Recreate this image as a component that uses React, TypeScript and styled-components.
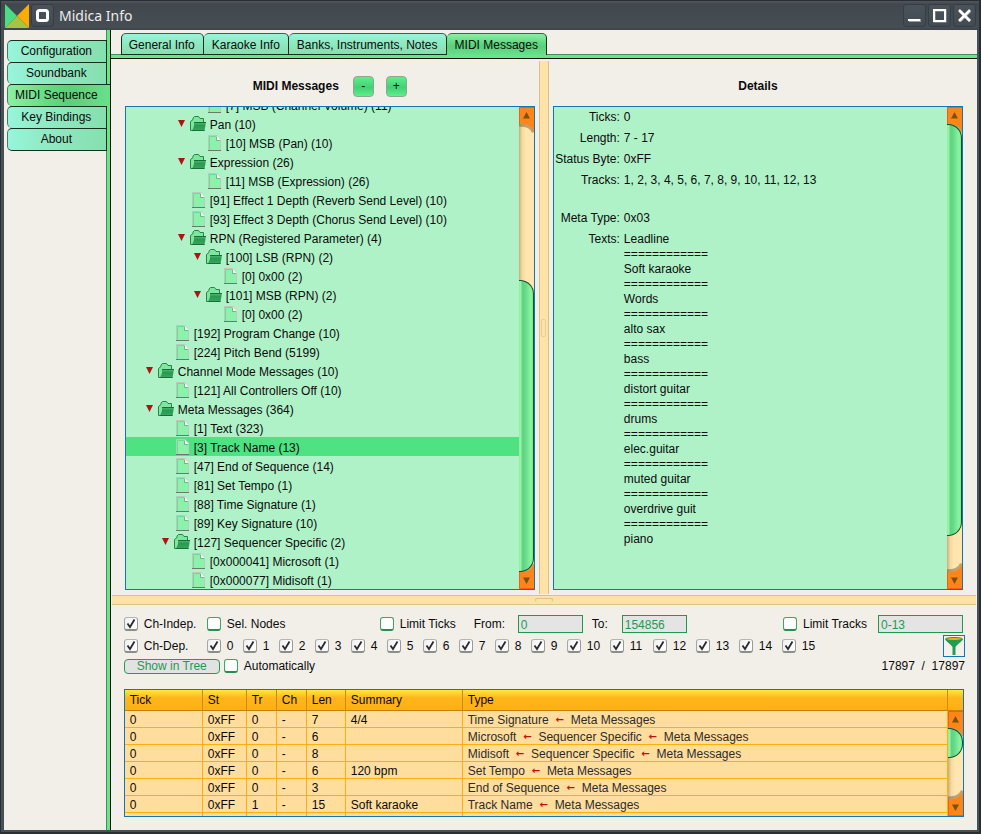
import React, { useState } from "react";
import styled, { createGlobalStyle, css } from "styled-components";

const Global = createGlobalStyle`
  *, *::before, *::after { box-sizing: border-box; }
  body {
    margin: 0;
    background: #2b3238;
    color: #0b0b0b;
    font-family: "Liberation Sans", Arial, sans-serif;
    font-size: 12px;
    line-height: 15px;
  }
  button, input { font: inherit; color: inherit; margin: 0; padding: 0; }
  ul { list-style: none; margin: 0; padding: 0; }
`;

/* ---------- window frame ---------- */

const Window = styled.div`
  display: flex;
  flex-direction: column;
  height: 100vh;
  min-height: 560px;
  border: 0 solid #272e34;
  border-width: 1px 2px 2px 1px;
  background: #485057;
`;

const TitleBar = styled.header`
  display: flex;
  align-items: center;
  gap: 2px;
  height: 29px;
  flex: none;
  padding: 0 3px 0 4px;
  background: linear-gradient(#51575d 0, #41474d 3px, #464e54 26px, #3d4349 29px);
`;

const Title = styled.h1`
  flex: 1;
  margin: 0 0 0 3px;
  font: 400 14px/22px "Noto Sans", sans-serif;
  color: #ececec;
`;

const FrameButton = styled.button`
  display: flex;
  align-items: center;
  justify-content: center;
  width: 23px;
  height: 23px;
  border: 1px solid #363d43;
  border-radius: 3px;
  background: linear-gradient(#4b535a, #434b52);
`;

const Body = styled.div`
  display: flex;
  flex: 1;
  min-height: 0;
  margin: 0 2px 2px 3px;
  background: #f2efe9;
`;

/* ---------- tabs ---------- */

const SideTabs = styled.nav`
  display: flex;
  flex-direction: column;
  flex: none;
  padding: 10px 0 0 3px;
`;

const tabColours = css<{ $active: boolean }>`
  background: ${(p) =>
    p.$active
      ? "linear-gradient(var(--dir), #8cf0a4, #5fd87f 45%, #5bcf7a 60%, #68e08c)"
      : "linear-gradient(var(--dir), #98f5dc, #92ecc8 30%, #86dfae)"};
`;

const SideTab = styled.button<{ $active: boolean }>`
  --dir: 90deg;
  position: relative;
  z-index: 1;
  height: 22px;
  margin-right: ${(p) => (p.$active ? "-4px" : "-1px")};
  padding: 0 ${(p) => (p.$active ? "12px" : "8px")} 0 7px;
  border: 1px solid #14301f;
  border-bottom-width: 0;
  border-left-color: #3c7f5c;
  border-right: ${(p) => (p.$active ? "0" : "1px solid #14301f")};
  border-radius: 5px 0 0 5px;
  ${tabColours}
  &:last-child {
    height: 23px;
    border-bottom-width: 1px;
  }
`;

const SideStrip = styled.div`
  flex: none;
  width: 5px;
  background: #68e48d;
  border: 0 solid #3f8f5b;
  border-left-width: 1px;
  border-right: 1px solid #04140a;
`;

const Main = styled.main`
  display: flex;
  flex-direction: column;
  flex: 1;
  min-width: 0;
`;

const TopTabs = styled.nav`
  display: flex;
  flex: none;
  padding: 3px 0 0 10px;
`;

const TopTab = styled.button<{ $active: boolean }>`
  --dir: 180deg;
  position: relative;
  z-index: 1;
  height: 22px;
  margin-bottom: -1px;
  padding: 2px 8px 0 7px;
  white-space: nowrap;
  border: 1px solid #14301f;
  border-top-color: #2e6b49;
  border-bottom: ${(p) => (p.$active ? "0" : "1px solid #14301f")};
  border-radius: 5px 5px 0 0;
  ${tabColours}
  & + & { border-left-width: 0; padding-left: 8px; }
  & + &:last-child { padding-left: 7px; }
`;

const TopStrip = styled.div`
  flex: none;
  height: 5px;
  background: #68e48d;
  border-top: 1px solid #3f8f5b;
  border-bottom: 1px solid #04140a;
`;

/* ---------- split panes ---------- */

const Upper = styled.div`
  display: flex;
  flex: 1;
  min-height: 0;
  margin: 2px 0 1px;
`;

const Pane = styled.section<{ $side: "left" | "right" }>`
  display: flex;
  flex-direction: column;
  flex: 1 1 0;
  min-width: 0;
  padding: ${(p) => (p.$side === "left" ? "0 4px 4px 14px" : "0 14px 4px 4px")};
`;

const PaneHeader = styled.div`
  display: flex;
  align-items: center;
  justify-content: center;
  gap: 12px;
  flex: none;
  height: 45px;
  padding-top: 5px;
`;

const Heading = styled.h2`
  margin: 0;
  font-size: 12px;
  font-weight: 700;
`;

const SquareButton = styled.button`
  width: 21px;
  height: 21px;
  border: 1px solid #8fa596;
  border-radius: 4px;
  background: linear-gradient(#5bf08c, #45cf74 55%, #5bf08c);
  &:first-of-type { margin-left: 2px; }
`;

const Viewport = styled.div`
  display: flex;
  flex: 1;
  min-height: 0;
  overflow: hidden;
  border: 1px solid #1474b8;
  background: #b0f2c8;
`;

const VSplit = styled.div`
  display: flex;
  align-items: center;
  justify-content: center;
  flex: none;
  width: 10px;
  background: #ffe2a6;
  border: 0 solid #d9c28a;
  border-width: 0 1px;
  &::after {
    content: "";
    width: 5px;
    height: 18px;
    border: 1px solid #e8cd96;
    border-radius: 2px;
  }
`;

const HSplit = styled.div`
  display: flex;
  align-items: center;
  justify-content: center;
  flex: none;
  height: 10px;
  margin: 0 1px;
  background: #ffe2a6;
  border: 0 solid #d9c28a;
  border-width: 1px 0;
  &::after {
    content: "";
    width: 18px;
    height: 4px;
    border: 1px solid #dcc088;
    border-bottom: 0;
    border-radius: 2px;
  }
`;

/* ---------- scroll bar ---------- */

const Bar = styled.div`
  display: flex;
  flex-direction: column;
  flex: none;
  width: 15px;
  overflow: hidden;
  background: linear-gradient(90deg, #c9ad79, #f3d79f 3px, #ffe6ae 7px, #ffe6ae);
`;

const ArrowButton = styled.button`
  display: block;
  flex: none;
  width: 15px;
  height: 17px;
  border: 0;
  background: none;
  svg { display: block; overflow: visible; }
`;

const Track = styled.div`
  display: flex;
  flex-direction: column;
  flex: 1;
  min-height: 0;
`;

const Space = styled.div<{ $grow: number }>`
  flex: ${(p) => p.$grow} 1 0;
`;

const Thumb = styled.div<{ $grow: number }>`
  position: relative;
  z-index: 1;
  flex: ${(p) => p.$grow} 1 0;
  border: 1px solid #14502b;
  border-left: 0;
  border-radius: 0 14px 14px 0;
  background: linear-gradient(90deg, #8ff0a0, #9bf5a4 2px, #5fd283 3px, #63d888 6px, #8cf5a0 12px, #70e890);
`;

function ArrowFace({ down = false }: { down?: boolean }) {
  return (
    <svg width="15" height="17" viewBox="0 0 15 17" aria-hidden="true">
      <g transform={down ? "matrix(1 0 0 -1 0 17)" : undefined}>
        <path d="M0 18C7 17 12 19 15 25" fill="none" stroke="#6b5326" strokeOpacity="0.45" strokeWidth="4" />
        <path d="M0 0H15V25C13 19 8 16.500 0 17Z" fill="#ff8518" />
        <path d="M0.500 17V0.500H15" fill="none" stroke="#f0601a" />
        <path d="M4 11.500L7.500 5L11 11.500Z" fill="#7a5208" />
      </g>
    </svg>
  );
}

function ScrollBar({ before, size, after }: { before: number; size: number; after: number }) {
  return (
    <Bar>
      <ArrowButton aria-label="Scroll up"><ArrowFace /></ArrowButton>
      <Track>
        <Space $grow={before} />
        <Thumb $grow={size} />
        <Space $grow={after} />
      </Track>
      <ArrowButton aria-label="Scroll down"><ArrowFace down /></ArrowButton>
    </Bar>
  );
}

/* ---------- message tree ---------- */

const Tree = styled.ul`
  display: flex;
  flex-direction: column;
  justify-content: flex-end;
  flex: 1;
  min-width: 0;
  overflow: hidden;
`;

const TreeRow = styled.li<{ $level: number; $selected: boolean }>`
  display: flex;
  align-items: center;
  flex: none;
  height: 19px;
  padding-left: ${(p) => 4 + 16 * p.$level}px;
  white-space: nowrap;
  background: ${(p) => (p.$selected ? "#4fe283" : "transparent")};
`;

const Twisty = styled.svg`
  flex: none;
  width: 12px;
  height: 19px;
`;

const NodeIcon = styled.svg`
  flex: none;
  width: 16px;
  height: 19px;
  margin-right: 4px;
`;

const NodeLabel = styled.span`
  padding-top: 4px;
`;

function FolderIcon() {
  return (
    <NodeIcon viewBox="0 0 16 19" aria-hidden="true">
      <path d="M0.500 16.500V7.500L3 5.500V4L4.500 2.500H8.500L10 4.500H13.500V16.500Z" fill="#7de79d" stroke="#2c8249" strokeLinejoin="round" />
      <path d="M4 8H16L14.500 17H2L4 12Z" fill="url(#folderFront)" />
      <path d="M4 8.500H16" stroke="#1c6e38" />
      <path d="M2 16.500H14.500" stroke="#1c6e38" />
    </NodeIcon>
  );
}

function LeafIcon() {
  return (
    <NodeIcon viewBox="0 0 16 19" aria-hidden="true">
      <path d="M2 2H11L15 6V18H2Z" fill="#bcc9c0" />
      <path d="M3 3H10V7H14V17H3Z" fill="#8cf1ab" />
      <path d="M3.500 17V3.500H10" fill="none" stroke="#72d894" />
      <path d="M10.500 4V7.500H14" fill="none" stroke="#62bf82" />
      <path d="M11 3L15 7H11Z" fill="#f1fdf5" />
      <path d="M2 17.500H15" stroke="#6b776f" />
    </NodeIcon>
  );
}

type Node = { level: number; text: string; open?: boolean };

const nodes: Node[] = [
  { level: 4, text: "[7] MSB (Channel Volume) (11)" },
  { level: 3, text: "Pan (10)", open: true },
  { level: 4, text: "[10] MSB (Pan) (10)" },
  { level: 3, text: "Expression (26)", open: true },
  { level: 4, text: "[11] MSB (Expression) (26)" },
  { level: 3, text: "[91] Effect 1 Depth (Reverb Send Level) (10)" },
  { level: 3, text: "[93] Effect 3 Depth (Chorus Send Level) (10)" },
  { level: 3, text: "RPN (Registered Parameter) (4)", open: true },
  { level: 4, text: "[100] LSB (RPN) (2)", open: true },
  { level: 5, text: "[0] 0x00 (2)" },
  { level: 4, text: "[101] MSB (RPN) (2)", open: true },
  { level: 5, text: "[0] 0x00 (2)" },
  { level: 2, text: "[192] Program Change (10)" },
  { level: 2, text: "[224] Pitch Bend (5199)" },
  { level: 1, text: "Channel Mode Messages (10)", open: true },
  { level: 2, text: "[121] All Controllers Off (10)" },
  { level: 1, text: "Meta Messages (364)", open: true },
  { level: 2, text: "[1] Text (323)" },
  { level: 2, text: "[3] Track Name (13)" },
  { level: 2, text: "[47] End of Sequence (14)" },
  { level: 2, text: "[81] Set Tempo (1)" },
  { level: 2, text: "[88] Time Signature (1)" },
  { level: 2, text: "[89] Key Signature (10)" },
  { level: 2, text: "[127] Sequencer Specific (2)", open: true },
  { level: 3, text: "[0x000041] Microsoft (1)" },
  { level: 3, text: "[0x000077] Midisoft (1)" },
];

function MessageTree() {
  const [selected, setSelected] = useState(18);
  return (
    <Tree role="tree" aria-label="MIDI Messages">
      {nodes.map((n, i) => (
        <TreeRow
          key={i}
          role="treeitem"
          aria-selected={i === selected}
          aria-expanded={n.open}
          $level={n.level}
          $selected={i === selected}
          onClick={() => setSelected(i)}
        >
          <Twisty viewBox="0 0 12 19" aria-hidden="true">
            {n.open && <path d="M0 6H7L3.500 13Z" fill="#b01212" />}
          </Twisty>
          {n.open ? <FolderIcon /> : <LeafIcon />}
          <NodeLabel>{n.text}</NodeLabel>
        </TreeRow>
      ))}
    </Tree>
  );
}

/* ---------- details ---------- */

const Details = styled.dl`
  display: grid;
  grid-template-columns: 66px 1fr;
  column-gap: 4px;
  align-content: start;
  flex: 1;
  min-width: 0;
  margin: 0;
  dt, dd { margin: 0; padding: 3px 0; white-space: nowrap; }
  dt { text-align: right; }
`;

const DetailGap = styled.div`
  grid-column: 1 / -1;
  height: 17px;
`;

const TextLine = styled.div`
  height: 15px;
`;

const texts = [
  "Leadline", "Soft karaoke", "Words", "alto sax", "bass", "distort guitar",
  "drums", "elec.guitar", "muted guitar", "overdrive guit", "piano",
];

/* ---------- filter ---------- */

const Lower = styled.section`
  flex: none;
  padding: 8px 12px 13px 13px;
`;

const FilterRow = styled.div<{ $h: number }>`
  display: flex;
  align-items: center;
  height: ${(p) => p.$h}px;
`;

const Cell = styled.div<{ $w: number }>`
  display: flex;
  flex: none;
  width: ${(p) => p.$w}px;
`;

const Filler = styled.div`
  flex: 1;
`;

const CheckLabel = styled.label`
  display: flex;
  align-items: center;
  gap: 6px;
  white-space: nowrap;
`;

const CheckText = styled.span`
  padding-top: 1px;
`;

const Channels = styled.div`
  display: flex;
  gap: 9px;
  ${CheckLabel} { width: 27px; }
  ${CheckLabel}:nth-child(n + 11) { width: 34px; }
`;

const TickBox = styled.span`
  position: relative;
  display: block;
  flex: none;
  width: 14px;
  height: 14px;
  svg {
    position: absolute;
    inset: 0;
    pointer-events: none;
  }
`;

const TickInput = styled.input`
  display: block;
  appearance: none;
  width: 14px;
  height: 14px;
  border: 1px solid #3ea566;
  border-bottom: 2px solid #2c8b50;
  border-radius: 3px;
  background: #fdfffd;
  &:checked {
    border-color: #b4b4b4 #9a9a9a #8b8f8b #a6a6a6;
    background: linear-gradient(90deg, #f1f1f1, #fff);
  }
`;

function Check({ label, on = false }: { label: string; on?: boolean }) {
  const [checked, setChecked] = useState(on);
  return (
    <CheckLabel>
      <TickBox>
        <TickInput type="checkbox" checked={checked} onChange={() => setChecked(!checked)} />
        {checked && (
          <svg width="14" height="14" viewBox="0 0 14 14" aria-hidden="true">
            <path d="M3.500 6.500L6 10L10.500 2.500" fill="none" stroke="#2b2b2b" strokeWidth="1.800" />
          </svg>
        )}
      </TickBox>
      <CheckText>{label}</CheckText>
    </CheckLabel>
  );
}

const FieldLabel = styled.label<{ $w: number }>`
  flex: none;
  width: ${(p) => p.$w}px;
  padding-top: 1px;
`;

const Field = styled.input<{ $w: number }>`
  flex: none;
  width: ${(p) => p.$w}px;
  height: 18px;
  padding: 1px 2px 0;
  border: 1px solid #1e9a4e;
  background: #e4e4e4;
  color: #249a50;
`;

const ShowButton = styled.button`
  width: 96px;
  height: 15px;
  margin-right: 4px;
  line-height: 13px;
  border: 1px solid #2a9a55;
  border-radius: 4px;
  background: #e2e2e2;
  color: #249a50;
`;

const Counts = styled.span`
  padding-top: 1px;
  white-space: pre;
`;

const FunnelButton = styled.button`
  flex: none;
  display: flex;
  align-items: center;
  justify-content: center;
  width: 22px;
  height: 22px;
  border: 1px solid #1474b8;
  background: #f4f1ea;
`;

/* ---------- message table ---------- */

const TableBox = styled.div`
  height: 128px;
  margin: 14px 1px 0 0;
  overflow: hidden;
  display: grid;
  grid-template: 21px 1fr / 1fr 15px;
  border: 1px solid #1474b8;
  background: #ffdd9c;
`;

const TableArea = styled.div`
  grid-row: 1 / -1;
  min-height: 0;
  overflow: hidden;
`;

const Corner = styled.div`
  background: linear-gradient(#ffe93a, #ffb51c 8px, #ffb010);
  border-bottom: 1px solid #c87f0a;
`;

const Table = styled.table`
  width: 100%;
  table-layout: fixed;
  border-collapse: separate;
  border-spacing: 0;
  th, td {
    padding: 0 0 0 5px;
    text-align: left;
    font-weight: 400;
    white-space: nowrap;
    overflow: hidden;
  }
  th {
    height: 21px;
    line-height: 20px;
    border-right: 1px solid #cf8a10;
    border-bottom: 1px solid #c87f0a;
    background: linear-gradient(#ffe93a, #ffb51c 8px, #ffb010);
  }
  td {
    height: 17px;
    padding-top: 2px;
    line-height: 14px;
    border-right: 1px solid #ffae0c;
    border-bottom: 1px solid #ffae0c;
  }
  td:last-child { color: #2c2c2c; }
`;

const Col = styled.col<{ $w?: number }>`
  width: ${(p) => (p.$w ? `${p.$w}px` : "auto")};
`;

const Arrow = styled.span`
  display: inline-block;
  width: 22px;
  text-align: center;
  font: 700 10px/14px "DejaVu Sans", sans-serif;
  vertical-align: top;
  color: #c40f0f;
`;

type Row = { cells: string[]; path: string[] };

const rows: Row[] = [
  { cells: ["0", "0xFF", "0", "-", "7", "4/4"], path: ["Time Signature", "Meta Messages"] },
  { cells: ["0", "0xFF", "0", "-", "6", ""], path: ["Microsoft", "Sequencer Specific", "Meta Messages"] },
  { cells: ["0", "0xFF", "0", "-", "8", ""], path: ["Midisoft", "Sequencer Specific", "Meta Messages"] },
  { cells: ["0", "0xFF", "0", "-", "6", "120 bpm"], path: ["Set Tempo", "Meta Messages"] },
  { cells: ["0", "0xFF", "0", "-", "3", ""], path: ["End of Sequence", "Meta Messages"] },
  { cells: ["0", "0xFF", "1", "-", "15", "Soft karaoke"], path: ["Track Name", "Meta Messages"] },
  { cells: ["", "", "", "", "", ""], path: [] },
];

function MessageTable() {
  return (
    <TableBox>
      <TableArea>
        <Table>
          <colgroup>
            {[78, 44, 30, 30, 39, 117].map((w, i) => <Col key={i} $w={w} />)}
            <Col />
          </colgroup>
          <thead>
            <tr>
              {["Tick", "St", "Tr", "Ch", "Len", "Summary", "Type"].map((h) => <th key={h} scope="col">{h}</th>)}
            </tr>
          </thead>
          <tbody>
            {rows.map((r, i) => (
              <tr key={i}>
                {r.cells.map((c, k) => <td key={k}>{c}</td>)}
                <td>
                  {r.path.map((p, k) => (
                    <React.Fragment key={k}>
                      {k > 0 && <Arrow>←</Arrow>}
                      {p}
                    </React.Fragment>
                  ))}
                </td>
              </tr>
            ))}
          </tbody>
        </Table>
      </TableArea>
      <Corner />
      <ScrollBar before={0} size={29} after={42} />
    </TableBox>
  );
}

/* ---------- application ---------- */

const sideTabs = ["Configuration", "Soundbank", "MIDI Sequence", "Key Bindings", "About"];
const topTabs = ["General Info", "Karaoke Info", "Banks, Instruments, Notes", "MIDI Messages"];

export default function App() {
  const [side, setSide] = useState(2);
  const [top, setTop] = useState(3);
  return (
    <>
      <Global />
      <Window>
        <TitleBar>
          <svg width="24" height="24" viewBox="0 0 24 24" aria-hidden="true">
            <defs>
              <linearGradient id="folderFront" x1="0" y1="0" x2="0" y2="1">
                <stop offset="0" stopColor="#4fc078" />
                <stop offset="0.4" stopColor="#2b9850" />
                <stop offset="1" stopColor="#38a95f" />
              </linearGradient>
            </defs>
            <path d="M0 0L12 12L0 24Z" fill="#4cdc86" />
            <path d="M24 0L12 12L24 24Z" fill="#ffab05" />
            <path d="M0 24L12 12L24 24Z" fill="#a6c540" />
          </svg>
          <FrameButton aria-label="Window menu">
            <svg width="13" height="13" viewBox="0 0 13 13">
              <rect x="1.500" y="1.500" width="10" height="10" rx="2" fill="none" stroke="#fff" strokeWidth="3" />
            </svg>
          </FrameButton>
          <Title>Midica Info</Title>
          <FrameButton aria-label="Minimize">
            <svg width="15" height="15" viewBox="0 0 15 15">
              <path d="M2 12.500H14" stroke="#9b9b9b" strokeWidth="3" />
              <path d="M1 12H13" stroke="#fff" strokeWidth="2" />
            </svg>
          </FrameButton>
          <FrameButton aria-label="Maximize">
            <svg width="15" height="15" viewBox="0 0 15 15">
              <rect x="2.500" y="2.500" width="11" height="11" fill="none" stroke="#a5a5a5" strokeWidth="2" />
              <rect x="2" y="2" width="11" height="11" fill="none" stroke="#fff" strokeWidth="2" />
            </svg>
          </FrameButton>
          <FrameButton aria-label="Close">
            <svg width="15" height="15" viewBox="0 0 15 15">
              <path d="M3 3L13 13M13 3L3 13" stroke="#a0a0a0" strokeWidth="3" />
              <path d="M2 2L13 13M13 2L2 13" stroke="#fff" strokeWidth="2.500" />
            </svg>
          </FrameButton>
        </TitleBar>
        <Body>
          <SideTabs>
            {sideTabs.map((t, i) => (
              <SideTab key={t} $active={i === side} onClick={() => setSide(i)}>{t}</SideTab>
            ))}
          </SideTabs>
          <SideStrip />
          <Main>
            <TopTabs>
              {topTabs.map((t, i) => (
                <TopTab key={t} $active={i === top} onClick={() => setTop(i)}>{t}</TopTab>
              ))}
            </TopTabs>
            <TopStrip />
            <Upper>
              <Pane $side="left">
                <PaneHeader>
                  <Heading>MIDI Messages</Heading>
                  <SquareButton aria-label="Collapse">-</SquareButton>
                  <SquareButton aria-label="Expand">+</SquareButton>
                </PaneHeader>
                <Viewport>
                  <MessageTree />
                  <ScrollBar before={157} size={291} after={0} />
                </Viewport>
              </Pane>
              <VSplit />
              <Pane $side="right">
                <PaneHeader>
                  <Heading>Details</Heading>
                </PaneHeader>
                <Viewport>
                  <Details>
                    <dt>Ticks:</dt><dd>0</dd>
                    <dt>Length:</dt><dd>7 - 17</dd>
                    <dt>Status Byte:</dt><dd>0xFF</dd>
                    <dt>Tracks:</dt><dd>1, 2, 3, 4, 5, 6, 7, 8, 9, 10, 11, 12, 13</dd>
                    <DetailGap />
                    <dt>Meta Type:</dt><dd>0x03</dd>
                    <dt>Texts:</dt>
                    <dd>
                      {texts.map((t, i) => (
                        <React.Fragment key={t}>
                          {i > 0 && <TextLine>============</TextLine>}
                          <TextLine>{t}</TextLine>
                        </React.Fragment>
                      ))}
                    </dd>
                  </Details>
                  <ScrollBar before={0} size={412} after={36} />
                </Viewport>
              </Pane>
            </Upper>
            <HSplit />
            <Lower>
              <FilterRow $h={22}>
                <Cell $w={83}><Check label="Ch-Indep." on /></Cell>
                <Cell $w={173}><Check label="Sel. Nodes" /></Cell>
                <Cell $w={94}><Check label="Limit Ticks" /></Cell>
                <FieldLabel htmlFor="from" $w={44}>From:</FieldLabel>
                <Field id="from" $w={65} defaultValue="0" />
                <Cell $w={9} />
                <FieldLabel htmlFor="to" $w={30}>To:</FieldLabel>
                <Field id="to" $w={65} defaultValue="154856" />
                <Filler />
                <Cell $w={95}><Check label="Limit Tracks" /></Cell>
                <Field $w={85} defaultValue="0-13" aria-label="Tracks" />
                <Cell $w={2} />
              </FilterRow>
              <FilterRow $h={22}>
                <Cell $w={83}><Check label="Ch-Dep." on /></Cell>
                <Channels>
                  {Array.from({ length: 16 }, (_, i) => <Check key={i} label={String(i)} on />)}
                </Channels>
                <Filler />
                <FunnelButton aria-label="Filter">
                  <svg width="18" height="18" viewBox="0 0 18 18">
                    <path d="M0 2C1 5 6 7 7.500 10V18H10.500V10C12 7 17 5 18 2Z" fill="#1f9d50" />
                    <ellipse cx="9" cy="2" rx="8.500" ry="1.500" fill="#ffac0a" stroke="#1f9d50" />
                  </svg>
                </FunnelButton>
              </FilterRow>
              <FilterRow $h={18}>
                <ShowButton>Show in Tree</ShowButton>
                <Check label="Automatically" />
                <Filler />
                <Counts>{"17897  /  17897"}</Counts>
              </FilterRow>
              <MessageTable />
            </Lower>
          </Main>
        </Body>
      </Window>
    </>
  );
}
